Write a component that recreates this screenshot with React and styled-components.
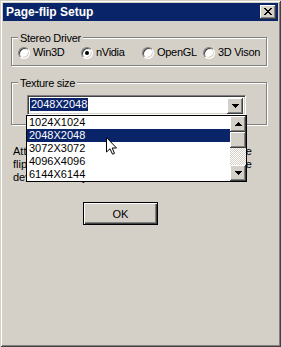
import React from 'react';
import styled, { createGlobalStyle } from 'styled-components';

const GlobalStyle = createGlobalStyle`
  html, body {
    margin: 0;
    padding: 0;
    background: #d4d0c8;
  }
  body {
    font-family: "Liberation Sans", Arial, sans-serif;
    font-size: 11px;
    color: #000;
  }
`;

const Window = styled.div`
  position: relative;
  width: 281px;
  height: 347px;
  box-sizing: border-box;
  padding: 3px;
  background: #d4d0c8;
  box-shadow: inset 1px 1px 0 #d4d0c8, inset -1px -1px 0 #404040,
    inset 2px 2px 0 #fff, inset -2px -2px 0 #808080;
  display: flex;
  flex-direction: column;
  overflow: hidden;
`;

const TitleBar = styled.div`
  height: 18px;
  background: #0a246a;
  display: flex;
  align-items: center;
  justify-content: space-between;
  padding: 0 2px 0 3px;
`;

const Title = styled.span`
  color: #fff;
  font-weight: bold;
  font-size: 12px;
`;

const raised = `
  background: #d4d0c8;
  box-shadow: inset -1px -1px 0 #404040, inset 1px 1px 0 #fff,
    inset -2px -2px 0 #808080;
`;

const CloseButton = styled.div`
  width: 16px;
  height: 14px;
  ${raised}
  display: flex;
  align-items: center;
  justify-content: center;
  padding-bottom: 1px;
  box-sizing: border-box;
`;

const Body = styled.div`
  display: flex;
  flex-direction: column;
  padding: 0 8px;
`;

const Group = styled.div`
  position: relative;
  margin-top: ${(p) => p.$top}px;
  width: 256px;
  height: ${(p) => p.$h}px;
  box-sizing: border-box;
  border: 1px solid #808080;
  box-shadow: inset 1px 1px 0 #fff, 1px 1px 0 #fff;
  padding: ${(p) => p.$pad};
`;

const Legend = styled.span`
  position: absolute;
  top: -6px;
  left: 6px;
  padding: 0 2px;
  line-height: 13px;
  letter-spacing: -0.3px;
  background: #d4d0c8;
`;

const RadioRow = styled.div`
  display: grid;
  grid-template-columns: 63px 61px 61px auto;
  align-items: center;
`;

const RadioItem = styled.label`
  display: flex;
  align-items: center;
  gap: 3px;
  line-height: 13px;
  letter-spacing: -0.3px;
  white-space: nowrap;
`;

const RadioCircle = styled.span`
  position: relative;
  width: 12px;
  height: 12px;
  box-sizing: border-box;
  border-radius: 50%;
  background: #fff;
  border: 1px solid;
  border-color: #808080 #fff #fff #808080;
  box-shadow: inset 1px 1px 0 #404040, inset -1px -1px 0 #d4d0c8;

  &::after {
    content: '';
    display: ${(p) => (p.$checked ? 'block' : 'none')};
    position: absolute;
    left: 3px;
    top: 3px;
    width: 4px;
    height: 4px;
    border-radius: 50%;
    background: #000;
  }
`;

const ComboWrap = styled.div`
  position: relative;
  width: 219px;
`;

const ComboField = styled.div`
  height: 20px;
  box-sizing: border-box;
  background: #fff;
  border: 1px solid;
  border-color: #808080 #fff #fff #808080;
  box-shadow: inset 1px 1px 0 #404040, inset -1px -1px 0 #d4d0c8;
  padding: 2px;
  display: flex;
  justify-content: space-between;
`;

const SelectedText = styled.span`
  height: 13px;
  line-height: 13px;
  padding: 0 1px;
  background: #0a246a;
  color: #fff;
`;

const ArrowButton = styled.div`
  width: 16px;
  height: 16px;
  flex: none;
  ${raised}
  display: flex;
  align-items: center;
  justify-content: center;
`;

const DropList = styled.div`
  position: absolute;
  top: 20px;
  left: -1px;
  width: 221px;
  height: 67px;
  box-sizing: border-box;
  border: 1px solid #000;
  background: #fff;
  display: flex;
  z-index: 2;
`;

const Items = styled.div`
  flex: 1;
  display: flex;
  flex-direction: column;
`;

const Item = styled.div`
  height: 13px;
  line-height: 13px;
  padding-left: 2px;
  background: ${(p) => (p.$selected ? '#0a246a' : 'transparent')};
  color: ${(p) => (p.$selected ? '#fff' : '#000')};
`;

const ScrollBar = styled.div`
  width: 16px;
  display: flex;
  flex-direction: column;
`;

const Thumb = styled.div`
  height: 16px;
  ${raised}
`;

const Track = styled.div`
  flex: 1;
  background: repeating-conic-gradient(#d4d0c8 0 25%, #fff 0 50%) 0 0 / 2px 2px;
`;

const Note = styled.div`
  margin: 20px 0 0 2px;
  width: 239px;
`;

const NoteLine = styled.div`
  height: 13px;
  line-height: 13px;
  white-space: nowrap;
  text-align: ${(p) => (p.$last ? 'left' : 'justify')};
  text-align-last: ${(p) => (p.$last ? 'left' : 'justify')};
`;

const OkButton = styled.button`
  margin: 18px 0 0 72px;
  width: 75px;
  height: 23px;
  padding: 0;
  border: 1px solid #000;
  background: #d4d0c8;
  box-shadow: inset 1px 1px 0 #fff, inset -1px -1px 0 #404040,
    inset -2px -2px 0 #808080;
  font-family: "Liberation Sans", Arial, sans-serif;
  font-size: 11px;
  color: #000;
`;

const Cursor = styled.svg`
  position: absolute;
  left: 106px;
  top: 137px;
  z-index: 3;
`;

const CloseGlyph = () => (
  <svg width="8" height="7" viewBox="0 0 8 7" shapeRendering="crispEdges">
    <path
      d="M0 0h2v1H0zM6 0h2v1H6zM1 1h2v1H1zM5 1h2v1H5zM2 2h4v1H2zM3 3h2v1H3zM2 4h4v1H2zM1 5h2v1H1zM5 5h2v1H5zM0 6h2v1H0zM6 6h2v1H6z"
      fill="#000"
    />
  </svg>
);

const Arrow = ({ up }) => (
  <svg width="7" height="4" viewBox="0 0 7 4" shapeRendering="crispEdges">
    <path d={up ? 'M3 0h1v1h1v1h1v1h1v1H0V3h1V2h1V1h1z' : 'M0 0h7v1H6v1H5v1H4v1H3V3H2V2H1V1H0z'} fill="#000" />
  </svg>
);

const drivers = [
  { name: 'Win3D' },
  { name: 'nVidia', checked: true },
  { name: 'OpenGL' },
  { name: '3D Vison' },
];

const sizes = ['1024X1024', '2048X2048', '3072X3072', '4096X4096', '6144X6144'];

export default function App() {
  return (
    <>
      <GlobalStyle />
      <Window>
        <TitleBar>
          <Title>Page-flip Setup</Title>
          <CloseButton>
            <CloseGlyph />
          </CloseButton>
        </TitleBar>
        <Body>
          <Group $top={16} $h={29} $pad="8px 0 0 6px">
            <Legend>Stereo Driver</Legend>
            <RadioRow>
              {drivers.map((d) => (
                <RadioItem key={d.name}>
                  <RadioCircle $checked={d.checked} />
                  {d.name}
                </RadioItem>
              ))}
            </RadioRow>
          </Group>
          <Group $top={16} $h={43} $pad="12px 0 0 15px">
            <Legend>Texture size</Legend>
            <ComboWrap>
              <ComboField>
                <SelectedText>2048X2048</SelectedText>
                <ArrowButton>
                  <Arrow />
                </ArrowButton>
              </ComboField>
              <DropList>
                <Items>
                  {sizes.map((s, i) => (
                    <Item key={s} $selected={i === 1}>
                      {s}
                    </Item>
                  ))}
                </Items>
                <ScrollBar>
                  <ArrowButton>
                    <Arrow up />
                  </ArrowButton>
                  <Thumb />
                  <Track />
                  <ArrowButton>
                    <Arrow />
                  </ArrowButton>
                </ScrollBar>
              </DropList>
            </ComboWrap>
          </Group>
          <Note>
            <NoteLine>Attention: the texture size is used by the page</NoteLine>
            <NoteLine>flip surface and should not exceed the available</NoteLine>
            <NoteLine $last>device memory.</NoteLine>
          </Note>
          <OkButton>OK</OkButton>
        </Body>
        <Cursor width="11" height="18" viewBox="0 0 11 18">
          <path
            d="M0.5 0.5V15L4 11.8L6.5 17.2L8.5 16.3L6.2 11H10.5Z"
            fill="#fff"
            stroke="#000"
            strokeWidth="1"
            strokeLinejoin="miter"
          />
        </Cursor>
      </Window>
    </>
  );
}
